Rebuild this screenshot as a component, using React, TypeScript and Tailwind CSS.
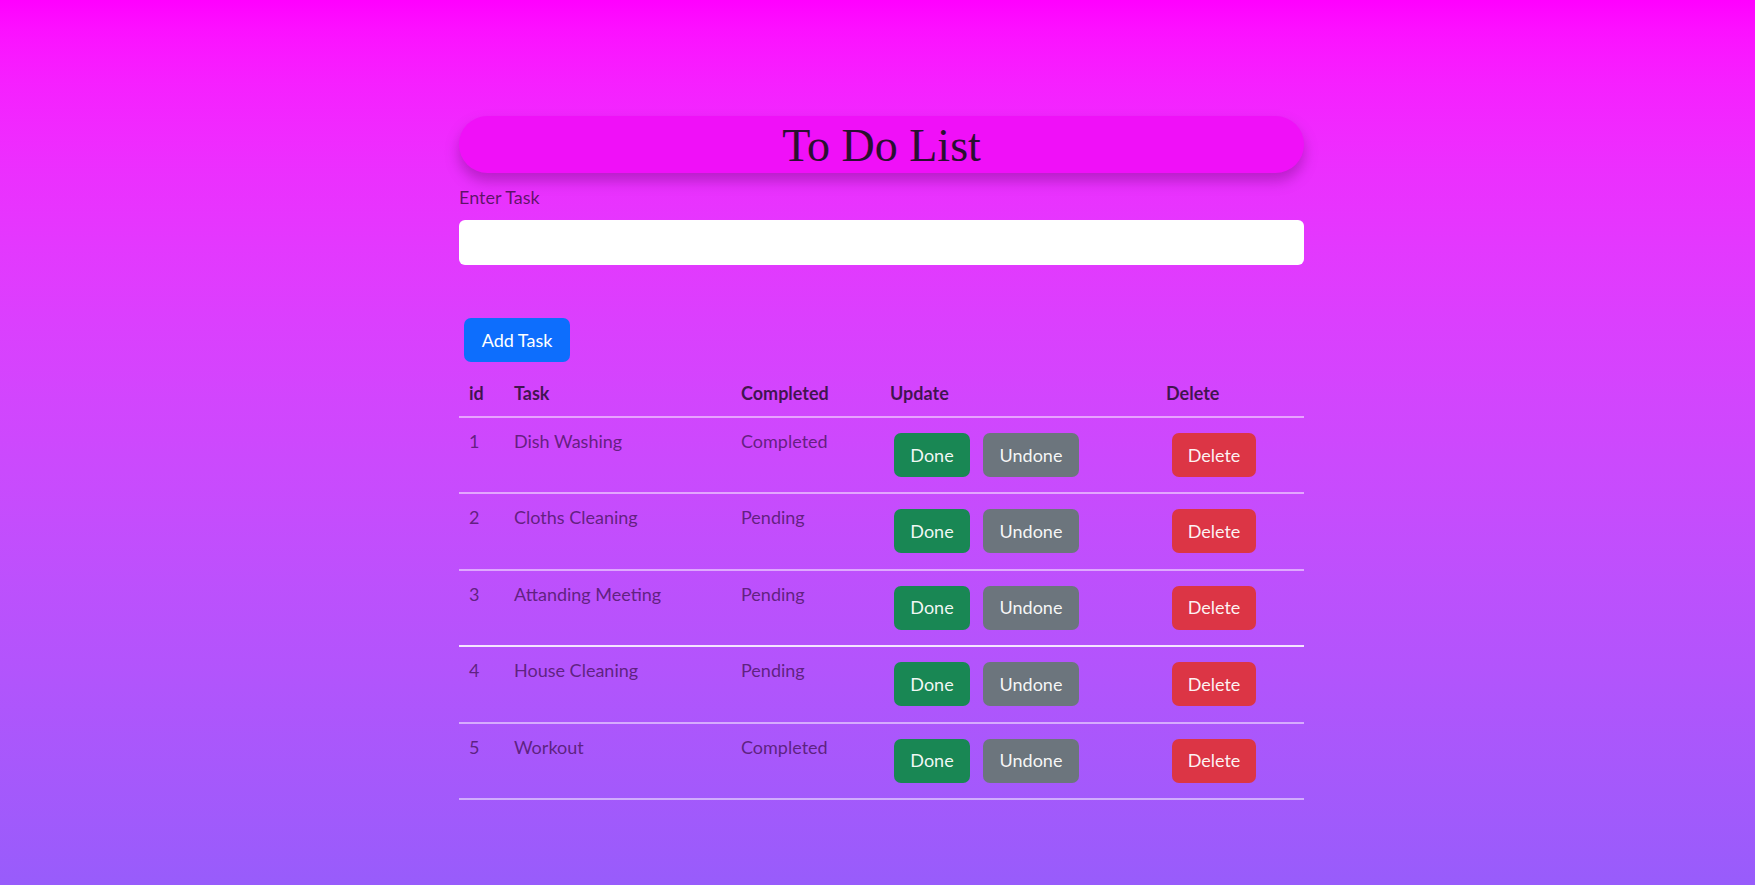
import { useState } from 'react';

type Task = { id: number; name: string; done: boolean };

const initialTasks: Task[] = [
  { id: 1, name: 'Dish Washing', done: true },
  { id: 2, name: 'Cloths Cleaning', done: false },
  { id: 3, name: 'Attanding Meeting', done: false },
  { id: 4, name: 'House Cleaning', done: false },
  { id: 5, name: 'Workout', done: true },
];

const cols = 'grid grid-cols-[45px_227px_149px_276px_148px]';

export default function App() {
  const [tasks, setTasks] = useState<Task[]>(initialTasks);
  const [text, setText] = useState('');

  const addTask = () => {
    if (!text.trim()) return;
    setTasks([...tasks, { id: tasks.length + 1, name: text, done: false }]);
    setText('');
  };

  const setDone = (id: number, done: boolean) =>
    setTasks(tasks.map((t) => (t.id === id ? { ...t, done } : t)));

  return (
    <div className="min-h-screen bg-gradient-to-b from-[#ff00ff] to-[#985cfb] font-['Lato',sans-serif] text-[18px]">
      <div className="w-[845px] ml-[459px] pt-[116px]">
        {/* Title */}
        <div className="h-[57px] rounded-full bg-[#f010f8] shadow-[0_8px_14px_rgba(90,0,100,0.35)] flex items-center justify-center">
          <h1 className="font-['Liberation_Serif',serif] text-[46px] leading-none text-[#2a0f30] pt-[2px]">
            To Do List
          </h1>
        </div>

        <label className="block mt-[13px] text-[18px] leading-[22px] text-black/60">Enter Task</label>
        <input
          value={text}
          onChange={(e) => setText(e.target.value)}
          className="block w-full h-[45px] mt-[12px] bg-white rounded-[6px] px-3 outline-none"
        />

        <button
          onClick={addTask}
          className="mt-[53px] ml-[5px] h-[44px] w-[106px] rounded-[7px] bg-[#0d6efd] text-white"
        >
          Add Task
        </button>

        {/* Table */}
        <div className="mt-[11px]">
          <div className={`${cols} h-[45px] items-center pb-[2px] font-bold text-black/70 border-b-2 border-white/50`}>
            <div className="pl-[10px]">id</div>
            <div className="pl-[10px]">Task</div>
            <div className="pl-[10px]">Completed</div>
            <div className="pl-[10px]">Update</div>
            <div className="pl-[10px]">Delete</div>
          </div>
          {tasks.map((t) => (
            <div
              key={t.id}
              className={`${cols} h-[76.4px] text-[#4a1460]/80 border-b-2 ${
                t.id === 3 ? 'border-white/85' : 'border-white/50'
              }`}
            >
              <div className="pl-[10px] pt-[10px]">{t.id}</div>
              <div className="pl-[10px] pt-[10px]">{t.name}</div>
              <div className="pl-[10px] pt-[10px]">{t.done ? 'Completed' : 'Pending'}</div>
              <div className="pl-[14px] pt-[15px] flex gap-[13px] items-start">
                <button
                  onClick={() => setDone(t.id, true)}
                  className="h-[44px] w-[76px] rounded-[7px] bg-[#198754] text-white/95"
                >
                  Done
                </button>
                <button
                  onClick={() => setDone(t.id, false)}
                  className="h-[44px] w-[96px] rounded-[7px] bg-[#6c757d] text-white/95"
                >
                  Undone
                </button>
              </div>
              <div className="pl-[16px] pt-[15px]">
                <button
                  onClick={() => setTasks(tasks.filter((x) => x.id !== t.id))}
                  className="h-[44px] w-[84px] rounded-[7px] bg-[#dc3545] text-white/95"
                >
                  Delete
                </button>
              </div>
            </div>
          ))}
        </div>
      </div>
    </div>
  );
}
